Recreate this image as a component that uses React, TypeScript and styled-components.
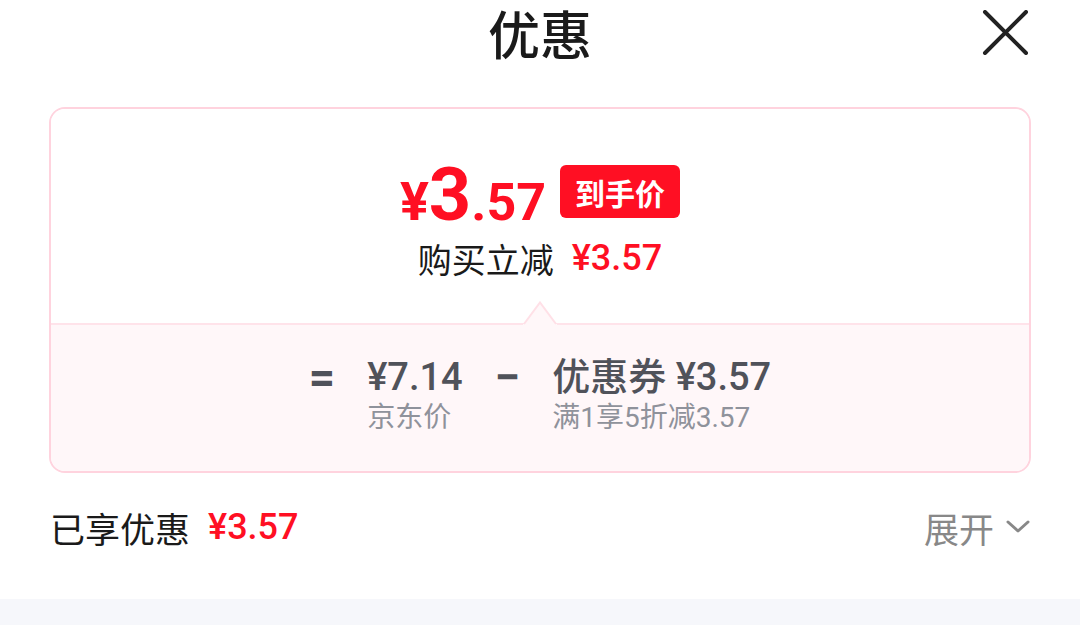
import styled, { createGlobalStyle } from "styled-components"

const Global = createGlobalStyle`
  html, body {
    margin: 0;
    padding: 0;
    background: #ffffff;
  }
  body {
    font-family: Roboto, "Noto Sans CJK SC", sans-serif;
    -webkit-font-smoothing: antialiased;
  }
`

const RED = "#ff0f23"

const Sheet = styled.div`
  width: 1080px;
  height: 625px;
  display: flex;
  flex-direction: column;
  background: #fff;
  overflow: hidden;
`

const Header = styled.header`
  position: relative;
  height: 72px;
  box-sizing: border-box;
  padding-top: 6px;
  display: flex;
  align-items: flex-start;
  justify-content: center;
`
const Title = styled.h1`
  margin: 0;
  font-size: 52px;
  font-weight: 500;
  line-height: 64px;
  color: #1a1a1a;
  font-family: Roboto, "Noto Sans CJK SC", sans-serif;
`
const CloseButton = styled.button`
  position: absolute;
  right: 50px;
  top: 8px;
  width: 49px;
  height: 49px;
  padding: 0;
  border: none;
  background: transparent;
  display: flex;
  align-items: center;
  justify-content: center;
`

const Card = styled.section`
  margin: 35px 49px 0;
  border: 2px solid #ffd3de;
  border-radius: 16px;
  overflow: hidden;
`
const Upper = styled.div`
  position: relative;
  height: 214px;
  box-sizing: border-box;
  padding-top: 56px;
  display: flex;
  flex-direction: column;
  align-items: center;
  background: #fff;
`
const PriceRow = styled.div`
  display: flex;
  align-items: center;
  gap: 14px;
  height: 53px;
`
const BigPrice = styled.div`
  display: flex;
  align-items: baseline;
  color: ${RED};
  font-family: Roboto, sans-serif;
  font-weight: 700;
  line-height: 1;
  margin-top: 6px;
`
const PricePart = styled.span<{ $size: number }>`
  font-size: ${(p) => p.$size}px;
`
const Badge = styled.span`
  height: 53px;
  padding: 0 15px;
  border-radius: 6px;
  background: ${RED};
  color: #fff;
  font-size: 30px;
  font-weight: 700;
  display: flex;
  align-items: center;
  font-family: "Noto Sans CJK SC", sans-serif;
`
const SubLine = styled.div`
  margin-top: 20px;
  display: flex;
  align-items: center;
  gap: 18px;
  height: 40px;
  font-size: 34px;
  color: #1a1a1a;
  font-family: "Noto Sans CJK SC", sans-serif;
`
const RedAmount = styled.span<{ $size: number }>`
  color: ${RED};
  font-family: Roboto, sans-serif;
  font-weight: 500;
  font-size: ${(p) => p.$size}px;
`
const Pointer = styled.svg`
  position: absolute;
  left: 50%;
  bottom: -2px;
  transform: translateX(-50%);
`

const Lower = styled.div`
  border-top: 2px solid #ffe3ea;
  background: #fff7f9;
  height: 148px;
  box-sizing: border-box;
  padding-top: 28px;
  display: flex;
  justify-content: center;
  align-items: flex-start;
  gap: 32px;
`
const Operator = styled.span`
  font-size: 46px;
  line-height: 48px;
  font-weight: 700;
  color: #50525a;
`
const Term = styled.div`
  display: flex;
  flex-direction: column;
`
const TermValue = styled.span`
  font-size: 38px;
  line-height: 48px;
  font-weight: 500;
  color: #50525a;
  font-family: Roboto, "Noto Sans CJK SC", sans-serif;
`
const TermLabel = styled.span`
  font-size: 28px;
  line-height: 34px;
  color: #8f929b;
  font-family: Roboto, "Noto Sans CJK SC", sans-serif;
`

const BottomRow = styled.div`
  height: 108px;
  padding: 0 50px 0 50px;
  display: flex;
  align-items: center;
  justify-content: space-between;
`
const Enjoyed = styled.div`
  display: flex;
  align-items: center;
  gap: 18px;
  font-size: 35px;
  color: #1a1a1a;
  font-family: "Noto Sans CJK SC", sans-serif;
`
const Expand = styled.button`
  border: none;
  background: transparent;
  padding: 0;
  display: flex;
  align-items: center;
  gap: 12px;
  font-size: 35px;
  color: #888888;
  font-family: "Noto Sans CJK SC", sans-serif;
`
const Filler = styled.div`
  flex: 1;
`
const Strip = styled.div`
  height: 26px;
  background: #f6f7fb;
`

export default function App() {
  return (
    <Sheet>
      <Global />
      <Header>
        <Title>优惠</Title>
        <CloseButton aria-label="关闭">
          <svg width="47" height="45" viewBox="0 0 47 45">
            <path d="M3 2 L44 43 M44 2 L3 43" stroke="#222" strokeWidth="4" strokeLinecap="round" />
          </svg>
        </CloseButton>
      </Header>

      <Card>
        <Upper>
          <PriceRow>
            <BigPrice>
              <PricePart $size={54}>¥</PricePart>
              <PricePart $size={74}>3</PricePart>
              <PricePart $size={52}>.57</PricePart>
            </BigPrice>
            <Badge>到手价</Badge>
          </PriceRow>
          <SubLine>
            购买立减
            <RedAmount $size={36}>¥3.57</RedAmount>
          </SubLine>
          <Pointer width="34" height="24" viewBox="0 0 34 24">
            <path d="M0 23 L2 23 L17 2 L32 23 L34 23 L34 24 L0 24 Z" fill="#fff7f9" />
            <path d="M1 23 L17 1.5 L33 23" fill="#fff7f9" stroke="#ffe0e7" strokeWidth="2" />
          </Pointer>
        </Upper>
        <Lower>
          <Operator>=</Operator>
          <Term>
            <TermValue>¥7.14</TermValue>
            <TermLabel>京东价</TermLabel>
          </Term>
          <Operator>−</Operator>
          <Term>
            <TermValue>优惠券 ¥3.57</TermValue>
            <TermLabel>满1享5折减3.57</TermLabel>
          </Term>
        </Lower>
      </Card>

      <BottomRow>
        <Enjoyed>
          已享优惠
          <RedAmount $size={36}>¥3.57</RedAmount>
        </Enjoyed>
        <Expand>
          展开
          <svg width="24" height="14" viewBox="0 0 24 14">
            <path d="M2 2 L12 11 L22 2" fill="none" stroke="#888" strokeWidth="3" strokeLinecap="round" strokeLinejoin="round" />
          </svg>
        </Expand>
      </BottomRow>
      <Filler />
      <Strip />
    </Sheet>
  )
}
